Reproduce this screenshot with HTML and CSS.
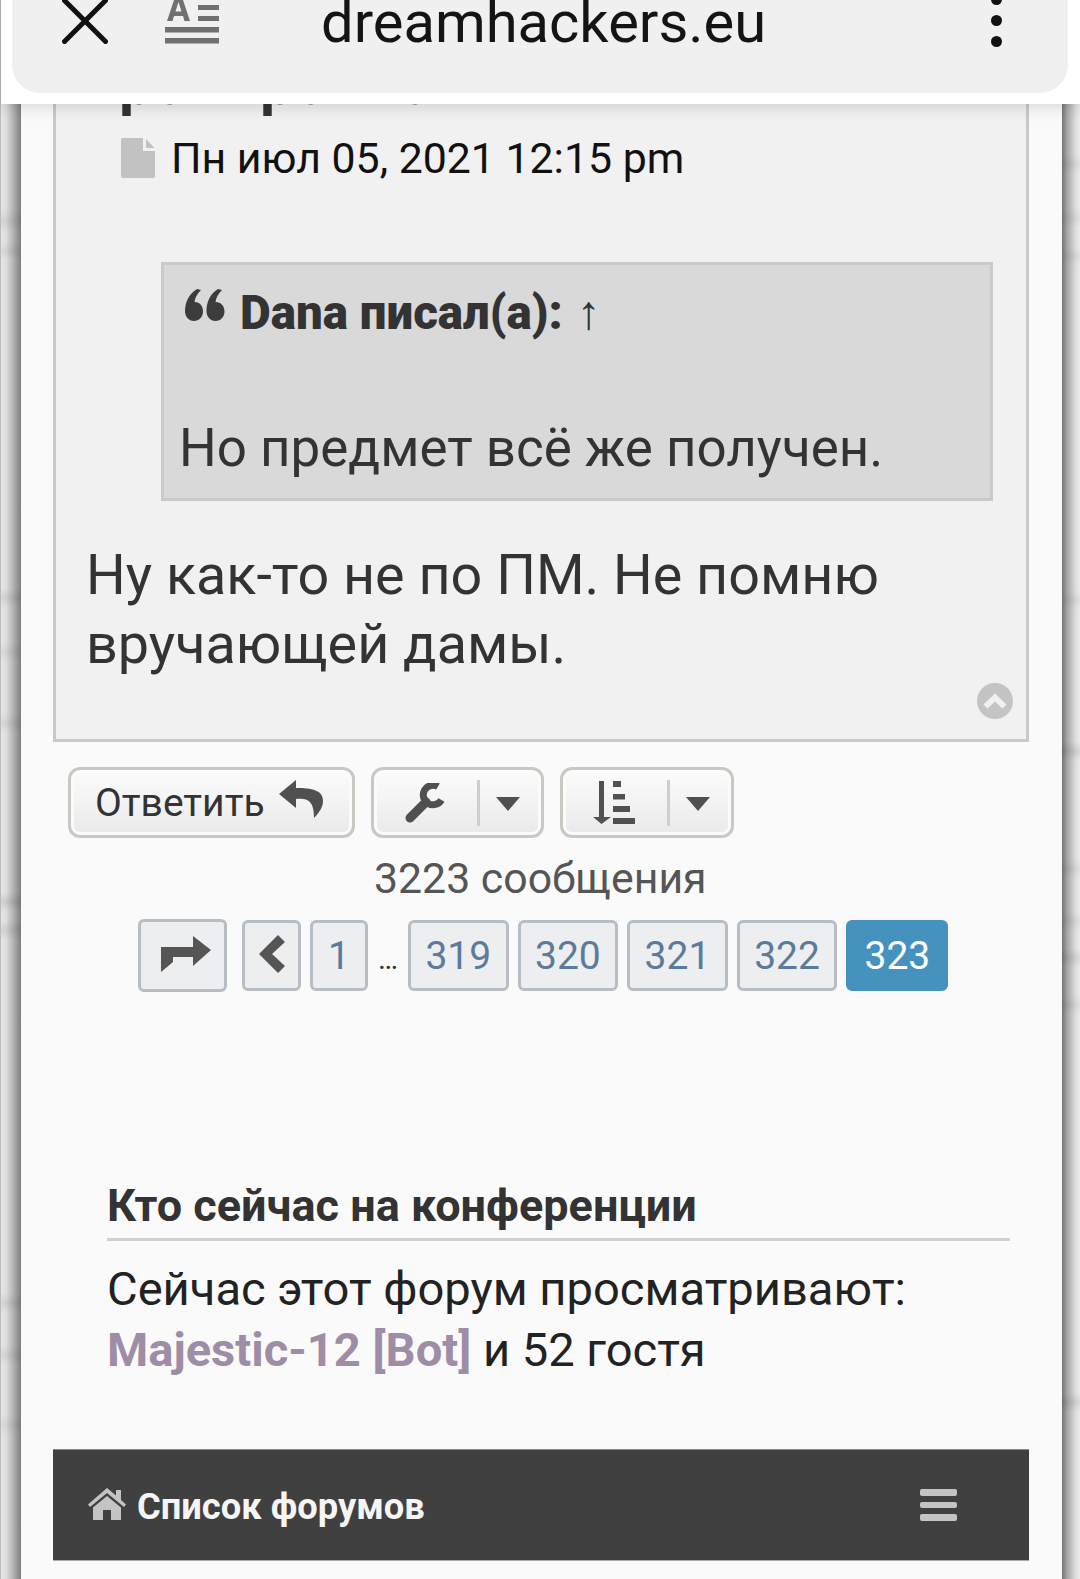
FILE: index.html
```html
<!DOCTYPE html>
<html lang="ru">
<head>
<meta charset="utf-8">
<title>dreamhackers.eu</title>
<link rel="stylesheet" href="styles.css">
</head>
<body>
<header class="toolbar">
  <div class="toolbar-card">
    <svg class="icon-close" viewBox="0 0 46 46"><path d="M2.500 2.500 43.500 43.500M43.500 2.500 2.500 43.500"/></svg>
    <svg class="icon-reader" viewBox="0 0 54 44"><path d="M2 21 10-3h7L25 21h-5.500l-1.500-5H9l-1.500 5zM10.500 11.500h6L13.500 2z"/><path d="M33 5h21v5H33zM33 16h21v5H33zM0 27h54v5.500H0zM0 38h54v5.500H0z"/></svg>
    <div class="url">dreamhackers.eu</div>
    <div class="dots"><i></i><i></i><i></i></div>
  </div>
</header>
<div class="page">
  <div class="band band-left"></div>
  <main class="wrap">
    <article class="post">
      <div class="clipped-title"><div class="clipped-line"><span class="t1">ро</span><span class="t2">ро</span><span class="t3">о</span></div></div>
      <div class="date">
        <svg class="icon-file" viewBox="0 0 34 40"><path d="M2 0h20v13h12v25a2 2 0 0 1-2 2H2a2 2 0 0 1-2-2V2a2 2 0 0 1 2-2z"/><path d="M25 1 33.500 10H25z"/></svg>
        <span>Пн июл 05, 2021 12:15 pm</span>
      </div>
      <blockquote class="quote">
        <div class="quote-head">
          <svg class="icon-quote" viewBox="0 0 40 32"><path d="M12 0 16 1C12 5 10 9 9.500 13 15 13 18 17 18 22.500 18 28 14 32 9 32 3.500 32 0 27.500 0 22 0 13 4 5 12 0z"/><path d="M33 0 37 1C33 5 31 9 30.500 13 36 13 39.500 17 39.500 22.500 39.500 28 35.500 32 30.500 32 25 32 21.500 27.500 21.500 22 21.500 13 25 5 33 0z"/></svg>
          <strong>Dana писал(а):</strong> <span class="arrow">↑</span>
        </div>
        <p class="quote-text">Но предмет всё же получен.</p>
      </blockquote>
      <p class="post-text">Ну как-то не по ПМ. Не помню вручающей дамы.</p>
      <svg class="icon-top" viewBox="0 0 36 36"><circle cx="18" cy="18" r="18"/><path d="M6.500 21.500 18 10.500 29.500 21.500 25.500 25.500 18 18.500 10.500 25.500z" fill="#f1f1f1"/></svg>
    </article>

    <div class="actions">
      <button class="btn btn-reply">Ответить
        <svg class="icon-reply" viewBox="0 0 44 38"><path d="M17 0 0 14 17 28V19C29 18 35 21 35 38 41 32 44 26 44 21 44 10 33 8 17 8z"/></svg>
      </button>
      <button class="btn btn-split">
        <svg class="icon-wrench" viewBox="0 0 40 40"><path class="wrench-handle" d="M5 35 21 19"/><path class="wrench-head" d="M36.500 17A9.800 9.800 0 1 1 33 3.500"/></svg>
        <span class="sep"></span><span class="caret"></span>
      </button>
      <button class="btn btn-split btn-sort">
        <svg class="icon-sort" viewBox="0 0 42 43"><path d="M6 0h5v36h7L8.500 43 0 36h6zM20 0h8v6h-8zM20 13h12v5.500H20zM20 25h17v6H20zM20 37h22v6H20z"/></svg>
        <span class="sep"></span><span class="caret"></span>
      </button>
    </div>

    <div class="count">3223 сообщения</div>

    <nav class="pager">
      <a class="page-btn jump"><svg class="icon-jump" viewBox="0 0 50 36"><path d="M0 36V11H32V0L50 14 32 30V21H12V26z"/></svg></a>
      <a class="page-btn prev"><svg class="icon-prev" viewBox="0 0 26 38"><path d="M19 0 26 7 13 19 26 31 19 38 0 19z"/></svg></a>
      <a class="page-btn one">1</a>
      <span class="ellipsis">…</span>
      <a class="page-btn num">319</a>
      <a class="page-btn num">320</a>
      <a class="page-btn num">321</a>
      <a class="page-btn num">322</a>
      <a class="page-btn num current">323</a>
    </nav>

    <section class="online">
      <h3 class="online-title">Кто сейчас на конференции</h3>
      <p class="online-text">Сейчас этот форум просматривают: <strong class="bot">Majestic-12 [Bot]</strong> и 52 гостя</p>
    </section>

    <footer class="navbar">
      <div class="nav-home">
        <svg class="icon-home" viewBox="0 0 38 32"><path d="M19 0 28 7.500V2h5v10l5 4.500-2 2.500L19 5 2 19l-2-2.500z"/><path d="M19 8 33 19.500V32H23V22h-8v10H5V19.500z"/></svg>
        <span>Список форумов</span>
      </div>
      <div class="burger"><i></i><i></i><i></i></div>
    </footer>
  </main>
  <div class="band band-right"></div>
</div>
</body>
</html>
```
FILE: styles.css
```css
* { box-sizing: border-box; }
html, body { margin: 0; padding: 0; }
body {
  width: 1080px;
  height: 1579px;
  overflow: hidden;
  background: #fafafa;
  font-family: Roboto, "Noto Sans", sans-serif;
  color: #111;
}

.toolbar {
  position: relative;
  z-index: 2;
  height: 104px;
  padding-left: 12px;
  padding-right: 12px;
  background: #fff;
  border-left: 1px solid #aaa;
  box-shadow: 0 2px 16px rgba(0, 0, 0, .16);
}
.toolbar-card {
  display: flex;
  align-items: flex-start;
  height: 93px;
  margin-left: -1px;
  background: #f0f0f0;
  border-radius: 0 0 28px 28px;
}
.icon-close {
  width: 46px;
  height: 46px;
  margin: -2px 0 0 50px;
  fill: none;
  stroke: #111;
  stroke-width: 5;
  stroke-linecap: round;
  flex: none;
}
.icon-reader {
  width: 54px;
  height: 44px;
  margin: 0 0 0 57px;
  fill: #707070;
  flex: none;
}
.url {
  margin: -14px 0 0 102px;
  width: 444px;
  font-size: 57.900px;
  line-height: 72px;
  color: #141414;
  white-space: nowrap;
  flex: none;
}
.dots {
  display: flex;
  flex-direction: column;
  gap: 10px;
  margin: -6px 0 0 226px;
  flex: none;
}
.dots i {
  display: block;
  width: 11px;
  height: 11px;
  border-radius: 50%;
  background: #111;
}

.page {
  display: flex;
  height: 1475px;
}
.band { flex: none; height: 100%; }
.band-left {
  width: 21px;
  border-left: 1px solid #bbb;
  background:
    linear-gradient(180deg,
      transparent 105px, rgba(0,0,0,.07) 117px, transparent 128px,
      transparent 138px, rgba(0,0,0,.06) 147px, transparent 156px,
      transparent 484px, rgba(0,0,0,.07) 494px, transparent 504px,
      transparent 538px, rgba(0,0,0,.05) 548px, transparent 558px,
      transparent 609px, rgba(0,0,0,.06) 619px, transparent 629px,
      transparent 788px, rgba(0,0,0,.09) 798px, transparent 808px,
      transparent 816px, rgba(0,0,0,.08) 826px, transparent 836px,
      transparent 1189px, rgba(0,0,0,.07) 1199px, transparent 1209px,
      transparent 1241px, rgba(0,0,0,.06) 1251px, transparent 1261px,
      transparent 1311px, rgba(0,0,0,.05) 1321px, transparent 1331px),
    linear-gradient(90deg, #e6e6e6 0, #dedede 25%, #b5b5b5 60%, #7f7f7f 100%);
}
.band-right {
  width: 18px;
  background:
    linear-gradient(180deg,
      transparent 50px, rgba(0,0,0,.05) 60px, transparent 70px,
      transparent 104px, rgba(0,0,0,.05) 114px, transparent 124px,
      transparent 142px, rgba(0,0,0,.05) 152px, transparent 162px,
      transparent 486px, rgba(0,0,0,.05) 496px, transparent 506px,
      transparent 637px, rgba(0,0,0,.09) 647px, transparent 657px,
      transparent 755px, rgba(0,0,0,.05) 765px, transparent 775px,
      transparent 807px, rgba(0,0,0,.05) 817px, transparent 827px,
      transparent 844px, rgba(0,0,0,.07) 854px, transparent 864px,
      transparent 891px, rgba(0,0,0,.05) 901px, transparent 911px,
      transparent 1288px, rgba(0,0,0,.08) 1298px, transparent 1308px),
    linear-gradient(90deg, #757575 0, #a8a8a8 30%, #dcdcdc 75%, #ececec 100%);
}
.wrap {
  flex: 1;
  background: #fafafa;
  padding: 0 33px 0 32px;
  min-width: 0;
}

.post {
  position: relative;
  height: 638px;
  background: #f1f1f1;
  border: 3px solid #c9c9c9;
  border-top: 0;
  padding: 0 33px 0 30px;
}
.clipped-title {
  height: 14px;
  overflow: hidden;
  font-size: 60px;
  font-weight: 700;
  color: #333;
}
.clipped-line {
  display: flex;
  height: 14px;
  margin: -27px 0 0 33px;
  line-height: 14px;
  white-space: nowrap;
}
.t1 { width: 141px; }
.t2 { width: 138px; }
.date {
  display: flex;
  align-items: center;
  gap: 16px;
  margin: 20px 0 0 35px;
  height: 40px;
  font-size: 42.800px;
  line-height: 40px;
  color: #111;
}
.icon-file {
  width: 34px;
  height: 40px;
  fill: #c2c2c2;
  flex: none;
}
.quote {
  margin: 84px 0 0 75px;
  height: 239px;
  background: #d9d9d9;
  border: 3px solid #cacaca;
  padding: 0 0 0 15px;
  color: #333;
}
.quote-head {
  display: flex;
  align-items: center;
  height: 40px;
  margin: 28px 0 0 6px;
  font-size: 47.500px;
  line-height: 40px;
  font-weight: 700;
}
.icon-quote {
  width: 40px;
  height: 32px;
  margin: -16px 15px 0 0;
  fill: #3c3c3c;
  flex: none;
}
.arrow { margin-left: 14px; }
.quote-text {
  margin: 85px 0 0;
  font-size: 52.900px;
  line-height: 60px;
}
.post-text {
  margin: 40px 0 0;
  font-size: 55.700px;
  line-height: 69px;
  color: #333;
}
.icon-top {
  position: absolute;
  right: 13px;
  bottom: 20px;
  width: 36px;
  height: 36px;
  fill: #c4c4c4;
}

.actions {
  display: flex;
  gap: 16px;
  margin: 25px 0 0 15px;
}
.btn {
  display: flex;
  align-items: center;
  height: 71px;
  margin: 0;
  border: 3px solid #c9c9c3;
  border-radius: 12px;
  background: linear-gradient(180deg, #fbfbfb 0, #f5f5f5 40%, #e9e9e9 100%);
  box-shadow: inset 0 0 0 3px #fbfbfb;
  font-family: inherit;
  font-size: 39px;
  color: #333;
  padding: 0;
}
.btn-reply {
  width: 287px;
  padding-left: 24px;
}
.icon-reply {
  width: 44px;
  height: 38px;
  margin: -8px 0 0 14px;
  fill: #505050;
  flex: none;
}
.btn-split { width: 173px; }
.btn-sort { width: 174px; }
.icon-wrench {
  width: 40px;
  height: 40px;
  margin-left: 31px;
  fill: none;
  stroke: #505050;
  flex: none;
}
.wrench-handle { stroke-width: 9; stroke-linecap: round; }
.wrench-head { stroke-width: 7; }
.icon-sort {
  width: 42px;
  height: 43px;
  margin-left: 30px;
  fill: #505050;
  flex: none;
}
.sep {
  width: 3px;
  height: 46px;
  margin-left: 32px;
  background: #cfcfc9;
  flex: none;
}
.caret {
  width: 0;
  height: 0;
  margin: 2px 0 0 16px;
  border-left: 12.500px solid transparent;
  border-right: 12.500px solid transparent;
  border-top: 14px solid #505050;
  flex: none;
}

.count {
  margin: 13px 0 0 321px;
  font-size: 42.800px;
  line-height: 54px;
  color: #555;
  white-space: nowrap;
}

.pager {
  display: flex;
  align-items: center;
  height: 73px;
  margin: 14px 0 0 85px;
}
.page-btn {
  display: flex;
  align-items: center;
  justify-content: center;
  height: 71px;
  background: #eceef0;
  border: 3px solid #b6bdc4;
  border-radius: 6px;
  font-size: 39px;
  color: #5c7a99;
  flex: none;
}
.jump { width: 89px; height: 73px; margin-right: 15px; }
.prev { width: 59px; margin-right: 9px; }
.one { width: 58px; }
.num { width: 100.600px; margin-right: 9px; }
.current {
  width: 102px;
  margin-right: 0;
  background: #4692bf;
  border-color: #4692bf;
  color: #fff;
}
.ellipsis {
  width: 40px;
  font-size: 30px;
  line-height: 30px;
  margin-top: 6px;
  text-align: center;
  color: #333;
  flex: none;
}
.icon-jump { width: 50px; height: 36px; fill: #555; margin: -3px 0 0 6px; }
.icon-prev { width: 26px; height: 38px; fill: #555; margin-top: -4px; }

.online {
  margin: 180px 0 0 54px;
  width: 903px;
}
.online-title {
  margin: 0;
  height: 69px;
  font-size: 45px;
  line-height: 68px;
  font-weight: 700;
  color: #333;
  border-bottom: 3px solid #d0d0d0;
}
.online-text {
  margin: 17px 0 0;
  font-size: 47.100px;
  line-height: 61px;
  color: #222;
}
.bot { color: #9e8da7; }

.navbar {
  display: flex;
  align-items: center;
  justify-content: space-between;
  height: 112px;
  margin-top: 69px;
  background: #404040;
  border-top: 1px solid #8a8a8a;
  border-bottom: 1px solid #aaa;
  padding: 0 72px 0 35px;
}
.nav-home {
  display: flex;
  align-items: center;
  gap: 11px;
  padding-top: 3px;
  font-size: 36.300px;
  font-weight: 700;
  color: #f5f5f5;
}
.icon-home {
  width: 38px;
  height: 32px;
  margin-top: -6px;
  fill: #c4c4c4;
  flex: none;
}
.burger {
  display: flex;
  flex-direction: column;
  gap: 6px;
}
.burger i {
  display: block;
  width: 37px;
  height: 6.500px;
  border-radius: 2px;
  background: #c4c4c4;
}
```
